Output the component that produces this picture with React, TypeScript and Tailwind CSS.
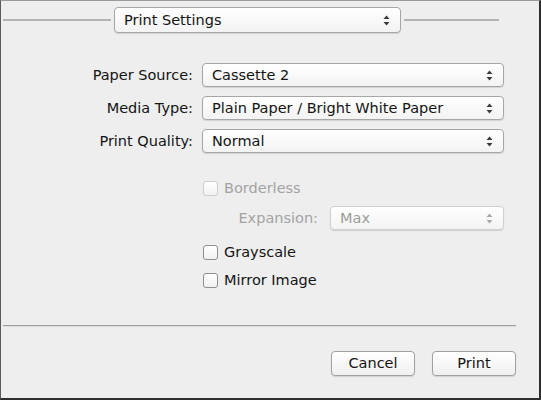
const font = { fontFamily: '"DejaVu Sans", "Liberation Sans", sans-serif' };

function Arrows({ dim = false }: { dim?: boolean }) {
  return (
    <svg width="7" height="11" viewBox="0 0 7 11" className="flex-none">
      <path d="M3.5 0.5 L6.5 4 L0.5 4 Z" fill={dim ? "#a8a8a8" : "#3a3a3a"} />
      <path d="M3.5 10.5 L6.5 7 L0.5 7 Z" fill={dim ? "#a8a8a8" : "#3a3a3a"} />
    </svg>
  );
}

function Popup({
  label,
  className,
  dim = false,
}: {
  label: string;
  className: string;
  dim?: boolean;
}) {
  return (
    <div
      className={`flex items-center justify-between pl-[9px] pr-[10px] rounded-[4px] border bg-gradient-to-b from-white to-[#f3f3f3] shadow-[0_1px_1px_rgba(0,0,0,0.12)] ${
        dim ? "border-[#cfcfcf] text-[#9c9c9c]" : "border-[#a6a6a6] text-[#141414]"
      } ${className}`}
    >
      <span className="text-[14.5px] leading-none">{label}</span>
      <Arrows dim={dim} />
    </div>
  );
}

function Check({ label, dim = false }: { label: string; dim?: boolean }) {
  return (
    <div className="flex items-center h-[20px]">
      <div
        className={`w-[15px] h-[15px] rounded-[3px] border bg-gradient-to-b from-white to-[#f1f1f1] ${
          dim ? "border-[#cdcdcd]" : "border-[#8e8e8e]"
        }`}
      />
      <span
        className={`ml-[6px] text-[14.5px] leading-none ${
          dim ? "text-[#a3a3a3]" : "text-[#141414]"
        }`}
      >
        {label}
      </span>
    </div>
  );
}

function Row({ label, value }: { label: string; value: string }) {
  return (
    <div className="flex items-center">
      <div className="w-[192px] text-right text-[14.5px] text-[#141414] leading-none">
        {label}
      </div>
      <Popup label={value} className="ml-[9px] w-[302px] h-[24px]" />
    </div>
  );
}

export default function App() {
  return (
    <div
      style={font}
      className="w-[541px] h-[400px] box-border bg-[#eeeeee] border-l border-t border-l-[#5a5a5a] border-t-[#9a9a9a] border-r-2 border-b-2 border-r-[#2e2e2e] border-b-[#2e2e2e] flex flex-col"
    >
      <div className="flex items-center mt-[6px] pl-[2px]">
        <div className="w-[108px] h-[2px] bg-[#b3b3b3]" />
        <Popup label="Print Settings" className="mx-[3px] w-[287px] h-[26px]" />
        <div className="w-[95px] h-[2px] bg-[#b3b3b3]" />
      </div>

      <div className="flex flex-col gap-[9px] mt-[30px]">
        <Row label="Paper Source:" value="Cassette 2" />
        <Row label="Media Type:" value="Plain Paper / Bright White Paper" />
        <Row label="Print Quality:" value="Normal" />
      </div>

      <div className="flex flex-col pl-[202px] mt-[25px]">
        <Check label="Borderless" dim />
        <div className="flex items-center mt-[8px]">
          <div className="w-[115px] text-right text-[14.5px] text-[#a3a3a3] leading-none">
            Expansion:
          </div>
          <Popup label="Max" dim className="ml-[12px] w-[174px] h-[24px]" />
        </div>
        <div className="mt-[12px]">
          <Check label="Grayscale" />
        </div>
        <div className="mt-[8px]">
          <Check label="Mirror Image" />
        </div>
      </div>

      <div className="ml-[2px] w-[513px] mt-[35px] border-t border-[#9f9f9f] border-b border-b-[#dcdcdc]" />

      <div className="flex justify-end gap-[17px] pr-[23px] mt-[24px]">
        <button className="w-[84px] h-[25px] rounded-[4px] border border-[#a0a0a0] bg-gradient-to-b from-white to-[#f0f0f0] shadow-[0_1px_1px_rgba(0,0,0,0.12)] text-[14.5px] text-[#141414] leading-none">
          Cancel
        </button>
        <button className="w-[84px] h-[25px] rounded-[4px] border border-[#a0a0a0] bg-gradient-to-b from-white to-[#f0f0f0] shadow-[0_1px_1px_rgba(0,0,0,0.12)] text-[14.5px] text-[#141414] leading-none">
          Print
        </button>
      </div>
    </div>
  );
}
